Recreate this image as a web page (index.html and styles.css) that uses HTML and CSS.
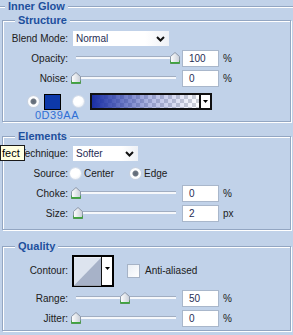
FILE: index.html
```html
<!DOCTYPE html>
<html lang="en">
<head>
<meta charset="UTF-8">
<title>Inner Glow</title>
<link rel="stylesheet" href="styles.css">
</head>
<body>
<div class="panel">
    <fieldset class="group group-top">
        <legend>Inner Glow</legend>
        <fieldset class="group group-structure">
            <legend>Structure</legend>
            <div class="row row-blend">
                <span class="label">Blend Mode:</span>
                <div class="select select-blend">
                    <span>Normal</span>
                    <svg class="chevron" width="9" height="6" viewBox="0 0 9 6"><path d="M1 1 L4.5 4.5 L8 1" fill="none" stroke="#111" stroke-width="2"/></svg>
                </div>
            </div>
            <div class="row">
                <span class="label">Opacity:</span>
                <div class="slider">
                    <div class="track"><span class="thumb" style="left:99%"><svg width="10" height="12" viewBox="0 0 10 12"><use href="#thumb"/></svg></span></div>
                </div>
                <span class="field">100</span><span class="unit">%</span>
            </div>
            <div class="row">
                <span class="label">Noise:</span>
                <div class="slider">
                    <div class="track"><span class="thumb" style="left:0%"><svg width="10" height="12" viewBox="0 0 10 12"><use href="#thumb"/></svg></span></div>
                </div>
                <span class="field">0</span><span class="unit">%</span>
            </div>
            <div class="row row-color">
                <span class="radio radio-on"></span>
                <span class="swatch"></span>
                <span class="radio radio-2"></span>
                <div class="gradient">
                    <span class="gradient-fill"></span>
                    <span class="drop"><svg width="5" height="3" viewBox="0 0 5 3"><path d="M0 0 H5 L2.5 3 Z" fill="#000"/></svg></span>
                </div>
            </div>
            <div class="hex">0D39AA</div>
        </fieldset>
    </fieldset>

    <fieldset class="group group-elements">
        <legend>Elements</legend>
        <div class="row row-tech">
            <span class="label">Technique:</span>
            <div class="select select-tech">
                <span>Softer</span>
                <svg class="chevron" width="9" height="6" viewBox="0 0 9 6"><path d="M1 1 L4.5 4.5 L8 1" fill="none" stroke="#111" stroke-width="2"/></svg>
            </div>
        </div>
        <div class="row">
            <span class="label">Source:</span>
            <span class="radio radio-center"></span><span class="opt">Center</span>
            <span class="radio radio-on radio-edge"></span><span class="opt">Edge</span>
        </div>
        <div class="row">
            <span class="label">Choke:</span>
            <div class="slider">
                <div class="track"><span class="thumb" style="left:0%"><svg width="10" height="12" viewBox="0 0 10 12"><use href="#thumb"/></svg></span></div>
            </div>
            <span class="field">0</span><span class="unit">%</span>
        </div>
        <div class="row">
            <span class="label">Size:</span>
            <div class="slider">
                <div class="track"><span class="thumb" style="left:2%"><svg width="10" height="12" viewBox="0 0 10 12"><use href="#thumb"/></svg></span></div>
            </div>
            <span class="field">2</span><span class="unit">px</span>
        </div>
        <div class="tooltip">fect</div>
    </fieldset>

    <fieldset class="group group-quality">
        <legend>Quality</legend>
        <div class="row row-contour">
            <span class="label">Contour:</span>
            <div class="contour">
                <svg class="curve" width="28" height="29" viewBox="0 0 28 29"><rect width="28" height="29" fill="#dde4ef"/><path d="M0 29 L28 0 L28 29 Z" fill="#a7b2c8"/></svg>
                <span class="drop drop-contour"><svg width="5" height="3" viewBox="0 0 5 3"><path d="M0 0 H5 L2.5 3 Z" fill="#000"/></svg></span>
            </div>
            <span class="check"></span><span class="opt">Anti-aliased</span>
        </div>
        <div class="row">
            <span class="label">Range:</span>
            <div class="slider">
                <div class="track"><span class="thumb" style="left:49%"><svg width="10" height="12" viewBox="0 0 10 12"><use href="#thumb"/></svg></span></div>
            </div>
            <span class="field">50</span><span class="unit">%</span>
        </div>
        <div class="row">
            <span class="label">Jitter:</span>
            <div class="slider">
                <div class="track"><span class="thumb" style="left:0%"><svg width="10" height="12" viewBox="0 0 10 12"><use href="#thumb"/></svg></span></div>
            </div>
            <span class="field">0</span><span class="unit">%</span>
        </div>
    </fieldset>
</div>

<svg width="0" height="0" class="defs">
    <defs>
        <linearGradient id="thumbFill" x1="0" y1="0" x2="1" y2="0">
            <stop offset="0" stop-color="#ffffff"/>
            <stop offset="1" stop-color="#c9cfd8"/>
        </linearGradient>
        <g id="thumb">
            <path d="M0.5 4.5 L5 0.5 L9.5 4.5 V11.5 H0.5 Z" fill="url(#thumbFill)" stroke="#8c98aa"/>
            <path d="M1 10 H9 V11.5 H1 Z" fill="#3da83d"/>
            <path d="M0.5 8.5 V11.5 H9.5 V8.5" fill="none" stroke="#4f9a4f"/>
        </g>
    </defs>
</svg>
</body>
</html>
```

FILE: styles.css
```css
body {
    margin: 0;
    background-color: #c1d2e9;
    font-family: "Liberation Sans", Arial, sans-serif;
    font-size: 10px;
    color: #202020;
}
.panel {
    width: 293px;
    height: 335px;
    overflow: hidden;
}
.defs {
    position: absolute;
}

/* group boxes */
.group {
    position: relative;
    min-width: 0;
    margin: 0 2px;
    padding: 0;
    border: 1px solid #93a6c2;
    box-shadow: inset 1px 1px 0 #ffffff, 1px 1px 0 #ffffff;
}
.group legend {
    margin-left: 12px;
    padding: 0 3px;
    line-height: 12px;
    font-size: 11px;
    font-weight: bold;
    color: #1d4f9d;
    background-color: #c1d2e9;
}
.group-top {
    margin: 0;
    border-width: 1px 0 0 0;
    box-shadow: inset 0 1px 0 #ffffff;
}
.group-top > legend {
    margin-left: 5px;
}
.group-structure {
    margin-top: 2px;
    padding: 3px 0 1px 0;
}
.group-elements {
    margin-top: 8px;
    padding: 2px 0 6px 0;
}
.group-quality {
    margin-top: 10px;
    padding: 1px 0 2px 0;
}

/* rows */
.row {
    display: flex;
    align-items: center;
    height: 20px;
}
.row-blend {
    height: 19px;
}
.row-tech {
    height: 19px;
}
.label {
    width: 65px;
    text-align: right;
    white-space: nowrap;
}

/* dropdowns */
.select {
    display: flex;
    align-items: center;
    justify-content: space-between;
    height: 15px;
    margin-left: 5px;
    padding: 0 4px 0 3px;
    background: linear-gradient(to right, #ffffff 75%, #eef1f6);
    color: #1f2d55;
    box-sizing: border-box;
}
.select-blend {
    width: 96px;
}
.select-tech {
    width: 65px;
}

/* sliders */
.slider {
    width: 110px;
    height: 12px;
    margin-left: 3px;
}
.track {
    position: relative;
    height: 2px;
    margin: 4px 5px 0 5px;
    border-top: 1px solid #a1aec2;
    background-color: #f6f8fb;
}
.thumb {
    position: absolute;
    top: -5px;
    width: 10px;
    height: 12px;
    margin-left: -5px;
}
.thumb svg {
    display: block;
}
.field {
    width: 37px;
    height: 17px;
    margin-left: 1px;
    padding-left: 6px;
    box-sizing: border-box;
    border: 1px solid #a9b7cb;
    background-color: #ffffff;
    color: #1f2d55;
    line-height: 15px;
}
.unit {
    margin-left: 4px;
}

/* colour row */
.row-color {
    height: 19px;
    margin-top: 4px;
}
.radio {
    width: 11px;
    height: 11px;
    border-radius: 50%;
    background: radial-gradient(circle at 40% 35%, #ffffff 50%, #e4e9f1);
    box-shadow: 0 0 0 1px #d5dde9;
    box-sizing: border-box;
}
.radio-on {
    background: radial-gradient(circle, #5f6874 0, #6f7884 2.5px, #ffffff 3.5px, #f1f4f8);
    box-shadow: 0 0 0 1px #c9d2df;
}
.row-color .radio-on {
    margin-left: 25px;
}
.swatch {
    width: 17px;
    height: 16px;
    margin-left: 5px;
    box-sizing: border-box;
    border: 1px solid #000000;
    background-color: #0d39aa;
}
.radio-2 {
    margin-left: 12px;
}
.gradient {
    display: flex;
    width: 122px;
    height: 17px;
    margin-left: 6px;
    box-sizing: border-box;
    border: 2px solid #111111;
}
.gradient-fill {
    flex: 1;
    background:
        linear-gradient(to right, #1a2fa4, rgba(40, 60, 180, 0.35) 55%, rgba(255, 255, 255, 0)),
        repeating-conic-gradient(#cfd2d8 0 25%, #ffffff 0 50%) 0 0 / 8px 8px;
}
.drop {
    display: flex;
    align-items: center;
    justify-content: center;
    width: 9px;
    border-left: 2px solid #111111;
    background-color: #ffffff;
}
.hex {
    height: 10px;
    margin: -1px 0 0 32px;
    font-size: 11px;
    line-height: 10px;
    color: #2f6fd6;
    letter-spacing: 0.5px;
}

/* source radios */
.radio-center {
    margin-left: 2px;
}
.opt {
    margin-left: 3px;
}
.radio-edge {
    margin-left: 16px;
}

/* contour */
.row-contour {
    height: 35px;
}
.contour {
    display: flex;
    width: 42px;
    height: 32px;
    margin-left: 4px;
    box-sizing: border-box;
    border: 2px solid #000000;
    background-color: #ffffff;
}
.curve {
    display: block;
}
.drop-contour {
    width: 11px;
    border-left-width: 1px;
    align-items: flex-start;
    padding-top: 10px;
    box-sizing: border-box;
}
.check {
    width: 11px;
    height: 12px;
    margin-left: 13px;
    border: 1px solid #a6b3c6;
    background: linear-gradient(135deg, #e9eef5, #ffffff);
}
.check + .opt {
    margin-left: 5px;
}

.tooltip {
    position: absolute;
    left: -3px;
    top: 3px;
    width: 25px;
    height: 16px;
    padding-left: 1px;
    box-sizing: border-box;
    border: 1px solid #1a1a1a;
    background-color: #ffffe1;
    color: #000000;
    font-size: 11px;
    line-height: 14px;
}
```
